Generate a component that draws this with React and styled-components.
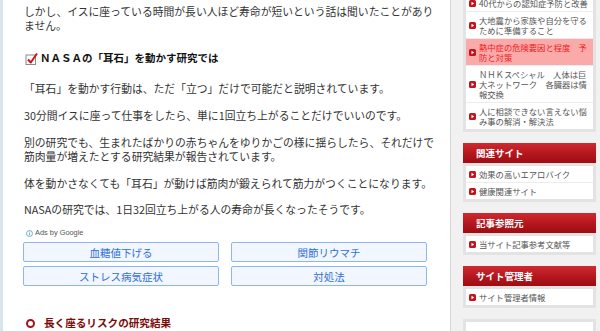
import styled, { createGlobalStyle } from 'styled-components';

const GlobalStyle = createGlobalStyle`
  html, body {
    margin: 0;
    padding: 0;
    background: #fff;
  }
  body {
    font-family: "Noto Sans CJK JP", "Noto Sans", sans-serif;
  }
`;

const Page = styled.div`
  display: flex;
  width: 600px;
  height: 331px;
  overflow: hidden;
`;

const Main = styled.main`
  box-sizing: border-box;
  flex: 0 0 451px;
  display: flex;
  flex-direction: column;
  padding: 4px 0 0 21px;
  border-left: 3px solid #dae4ef;
  border-right: 1px solid #d6d6d6;
  background: #fff;
  color: #333;
`;

const Para = styled.p`
  margin: ${(p) => p.$top ?? 13}px 0 0;
  font-size: 10.8px;
  line-height: 14px;
  white-space: nowrap;
`;

const CheckHeading = styled.h3`
  display: flex;
  align-items: center;
  gap: 2px;
  margin: 19px 0 0 1px;
  font-size: 10.5px;
  line-height: 14px;
  font-weight: bold;
  color: #111;
`;

const AdsLabel = styled.div`
  display: flex;
  align-items: center;
  gap: 2px;
  margin: 12px 0 0 2px;
  font-family: "Liberation Sans", Arial, sans-serif;
  font-size: 7.4px;
  line-height: 10px;
  color: #555;
`;

const AdGrid = styled.div`
  display: grid;
  grid-template-columns: 196px 196px;
  column-gap: 12px;
  row-gap: 4px;
  margin: 4px 0 0 -1px;
`;

const AdButton = styled.button`
  box-sizing: border-box;
  height: 20px;
  padding: 0;
  border: 1.5px solid #8fb5f5;
  border-radius: 2px;
  background: #f1f6ff;
  color: #2f6fd8;
  font-family: "Noto Sans CJK JP", sans-serif;
  font-size: 10.5px;
  line-height: 17px;
  text-align: center;
`;

const RingHeading = styled.h3`
  display: flex;
  align-items: center;
  gap: 9px;
  margin: 30px 0 0 2px;
  font-size: 10.6px;
  line-height: 14px;
  font-weight: bold;
  color: #7b0c0c;
`;

const Ring = styled.span`
  box-sizing: border-box;
  width: 9px;
  height: 9px;
  border: 2.5px solid #a3141a;
  border-radius: 50%;
`;

const Sidebar = styled.aside`
  flex: 1;
  display: flex;
  flex-direction: column;
  gap: 11px;
  padding: 0 4px 0 12px;
  background: #f1f1f1;
`;

const Widget = styled.section`
  display: flex;
  flex-direction: column;
  margin-top: ${(p) => p.$top ?? 0}px;
`;

const WidgetTitle = styled.h4`
  margin: 0;
  height: 20px;
  padding-left: 13px;
  background: linear-gradient(#cf2a2f, #b3161d 55%, #9e0c12);
  color: #fff;
  font-size: 9.5px;
  font-weight: bold;
  line-height: 20px;
`;

const LinkBox = styled.ul`
  margin: 0;
  padding: 0;
  list-style: none;
  background: #fff;
  border: 3px solid #e3e3e3;
`;

const LinkItem = styled.li`
  display: flex;
  align-items: center;
  gap: 3px;
  padding: 3px 2px 3px 3px;
  border-bottom: 1px solid #ececec;
  background: ${(p) => (p.$active ? '#fbaaaa' : '#fff')};
  color: ${(p) => (p.$active ? '#ee1c1c' : '#555')};
  font-size: 8.3px;
  line-height: 10px;

  &:last-child {
    border-bottom: none;
  }

  span {
    flex: 0 0 111px;
  }
`;

function CheckIcon() {
  return (
    <svg width="13" height="13" viewBox="0 0 13 13">
      <rect x="1" y="3" width="9.5" height="9.5" fill="#fff" stroke="#8a8a8a" strokeWidth="1" />
      <path d="M3 7.5 L5.8 10.5 L12 1.5" fill="none" stroke="#d0121b" strokeWidth="2" strokeLinejoin="round" />
    </svg>
  );
}

function InfoIcon() {
  return (
    <svg width="7" height="7" viewBox="0 0 8 8">
      <circle cx="4" cy="4" r="3.4" fill="none" stroke="#3da0c8" strokeWidth="0.9" />
      <rect x="3.55" y="3.3" width="0.9" height="2.7" fill="#3da0c8" />
      <rect x="3.55" y="1.9" width="0.9" height="0.9" fill="#3da0c8" />
    </svg>
  );
}

function BulletIcon() {
  return (
    <svg width="7" height="7" viewBox="0 0 7 7" style={{ flex: 'none' }}>
      <rect x="0" y="0" width="7" height="7" rx="1.6" fill="#c3141c" />
      <path d="M2.5 1.7 L5.2 3.5 L2.5 5.3 Z" fill="#fff" />
    </svg>
  );
}

const adWords = ['血糖値下げる', '関節リウマチ', 'ストレス病気症状', '対処法'];

const widgets = [
  { title: '関連サイト', links: ['効果の高いエアロバイク', '健康関連サイト'] },
  { title: '記事参照元', links: ['当サイト記事参考文献等'] },
  { title: 'サイト管理者', links: ['サイト管理者情報'] },
];

const recentLinks = [
  '40代からの認知症予防と改善',
  '大地震から家族や自分を守るために準備すること',
  '熱中症の危険要因と程度　予防と対策',
  'ＮＨＫスペシャル　人体は巨大ネットワーク　各臓器は情報交換',
  '人に相談できない言えない悩み事の解消・解決法',
];

export default function App() {
  return (
    <>
      <GlobalStyle />
      <Page>
        <Main>
          <Para $top={0}>
            しかし、イスに座っている時間が長い人ほど寿命が短いという話は聞いたことがあり
            <br />
            ません。
          </Para>
          <CheckHeading>
            <CheckIcon />
            ＮＡＳＡの「耳石」を動かす研究では
          </CheckHeading>
          <Para $top={16}>「耳石」を動かす行動は、ただ「立つ」だけで可能だと説明されています。</Para>
          <Para>30分間イスに座って仕事をしたら、単に1回立ち上がることだけでいいのです。</Para>
          <Para>
            別の研究でも、生まれたばかりの赤ちゃんをゆりかごの様に揺らしたら、それだけで
            <br />
            筋肉量が増えたとする研究結果が報告されています。
          </Para>
          <Para>体を動かさなくても「耳石」が動けば筋肉が鍛えられて筋力がつくことになります。</Para>
          <Para $top={12}>NASAの研究では、1日32回立ち上がる人の寿命が長くなったそうです。</Para>
          <AdsLabel>
            <InfoIcon />
            Ads by Google
          </AdsLabel>
          <AdGrid>
            {adWords.map((w) => (
              <AdButton key={w}>{w}</AdButton>
            ))}
          </AdGrid>
          <RingHeading>
            <Ring />
            長く座るリスクの研究結果
          </RingHeading>
        </Main>
        <Sidebar>
          <Widget $top={-8}>
            <LinkBox>
              {recentLinks.map((l, i) => (
                <LinkItem key={l} $active={i === 2}>
                  <BulletIcon />
                  <span>{l}</span>
                </LinkItem>
              ))}
            </LinkBox>
          </Widget>
          {widgets.map((w) => (
            <Widget key={w.title}>
              <WidgetTitle>{w.title}</WidgetTitle>
              <LinkBox>
                {w.links.map((l) => (
                  <LinkItem key={l}>
                    <BulletIcon />
                    <span>{l}</span>
                  </LinkItem>
                ))}
              </LinkBox>
            </Widget>
          ))}
          <Widget>
            <LinkBox>
              <LinkItem>
                <span>&nbsp;</span>
              </LinkItem>
            </LinkBox>
          </Widget>
        </Sidebar>
      </Page>
    </>
  );
}
